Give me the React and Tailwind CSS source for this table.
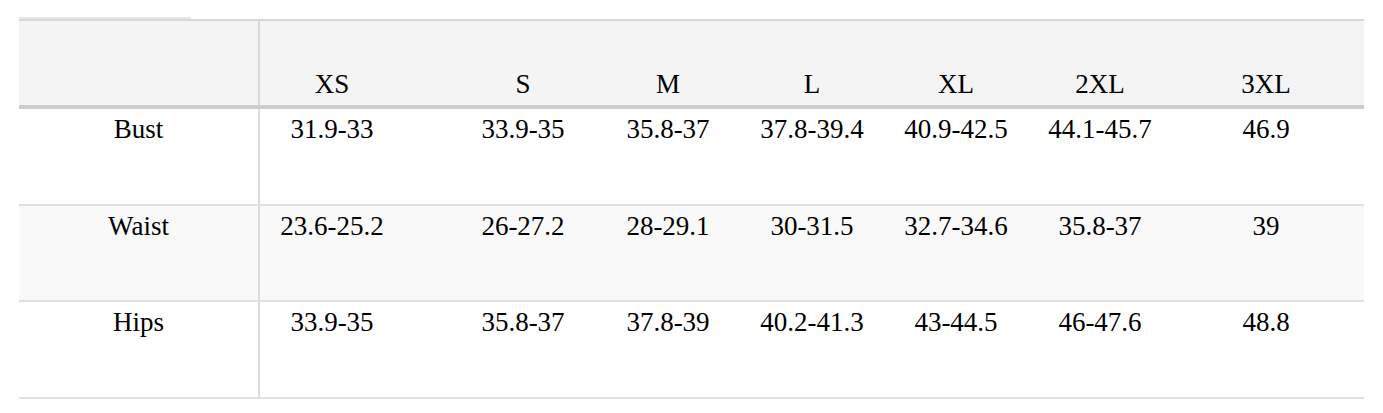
const sizes = ["XS", "S", "M", "L", "XL", "2XL", "3XL"];

const rows = [
  { label: "Bust", values: ["31.9-33", "33.9-35", "35.8-37", "37.8-39.4", "40.9-42.5", "44.1-45.7", "46.9"], bg: "bg-white", h: "h-[97px]" },
  { label: "Waist", values: ["23.6-25.2", "26-27.2", "28-29.1", "30-31.5", "32.7-34.6", "35.8-37", "39"], bg: "bg-[#f9f9f9]", h: "h-[96px]" },
  { label: "Hips", values: ["33.9-35", "35.8-37", "37.8-39", "40.2-41.3", "43-44.5", "46-47.6", "48.8"], bg: "bg-white", h: "h-[97px]" },
];

// per-column padding so the centred text sits where the original does
const colPad = ["pr-[24px]", "pl-[22px]", "", "", "", "pr-[11px]", "pr-[15px]"];

const gridCols = "grid grid-cols-[241px_168px_168px_144px_144px_144px_155px_181px]";

export default function App() {
  return (
    <div className="w-[1383px] h-[413px] bg-white pt-[17px] px-[19px] text-black text-[27px] leading-[31px] font-['Liberation_Serif','Times_New_Roman',serif]">
      <div className="w-[172px] h-[2px] bg-[#e6e6e6]" />
      <div className="w-[1345px] border-t-2 border-[#d8d8d8]">
        {/* Header */}
        <div className={`${gridCols} h-[88px] bg-[#f4f4f4] border-b-4 border-[#cccccc]`}>
          <div className="border-r-2 border-[#d9d9d9]" />
          {sizes.map((s, i) => (
            <div key={s} className={`flex items-end justify-center pb-[5px] ${colPad[i]}`}>
              {s}
            </div>
          ))}
        </div>

        {/* Body */}
        {rows.map((row) => (
          <div key={row.label} className={`${gridCols} ${row.h} ${row.bg} border-b-2 border-[#e0e0e2]`}>
            <div className="border-r-2 border-[#dcdcdc] text-center pt-[5px]">{row.label}</div>
            {row.values.map((v, i) => (
              <div key={i} className={`text-center pt-[5px] ${colPad[i]}`}>
                {v}
              </div>
            ))}
          </div>
        ))}
      </div>
    </div>
  );
}
